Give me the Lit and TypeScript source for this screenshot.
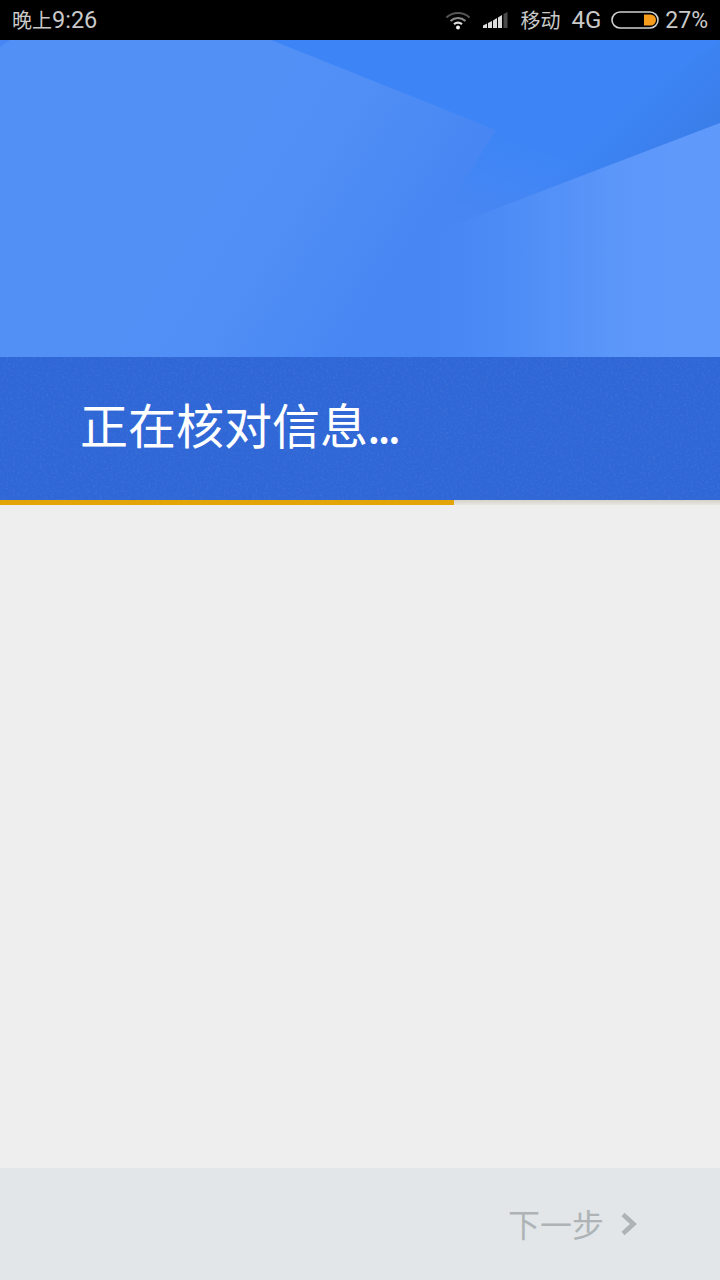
import { LitElement, html, css } from "lit";
import { customElement } from "lit/decorators.js";

@customElement("app-root")
export class AppRoot extends LitElement {
  static styles = css`
    :host {
      display: flex;
      flex-direction: column;
      width: 720px;
      height: 1280px;
      background: #eeeeee;
      font-family: "Roboto", "Noto Sans CJK SC", sans-serif;
      overflow: hidden;
    }
    .status {
      flex: none;
      height: 40px;
      background: #000;
      color: #c9c9c9;
      display: flex;
      align-items: center;
      padding: 0 12px;
      font-size: 23.5px;
      line-height: 40px;
    }
    .time { flex: 1; }
    .cjk { font-family: "Noto Sans CJK SC", sans-serif; font-size: 20px; }
    .right { display: flex; align-items: center; }
    .wifi { display: block; }
    .signal { display: block; margin-left: 12px; }
    .carrier { margin-left: 12px; }
    .net { margin-left: 11px; font-size: 24px; }
    .batt { margin-left: 10px; display: block; }
    .pct { margin-left: 6px; margin-top: 2px; font-size: 23px; }
    .hero { flex: none; display: block; width: 720px; height: 317px; }
    .band {
      flex: none;
      position: relative;
      height: 143px;
      background: #3067d6;
      display: flex;
      align-items: center;
      padding-left: 80px;
      overflow: hidden;
    }
    .noise { position: absolute; inset: 0; width: 100%; height: 100%; }
    .title {
      position: relative;
      color: #fff;
      font-size: 48px;
      line-height: 56px;
      font-weight: 400;
      margin-top: -7px;
      font-family: "Noto Sans CJK SC", sans-serif;
    }
    .dots { font-size: 36px; font-weight: 700; letter-spacing: -1.4px; }
    .track {
      flex: none;
      height: 5px;
      background: linear-gradient(#d6d3ca, #e6e5e1);
    }
    .fill { width: 454px; height: 100%; background: #e3a408; }
    .body { flex: 1; }
    .footer {
      flex: none;
      height: 112px;
      background: #e2e6e9;
      display: flex;
      align-items: center;
      justify-content: flex-end;
      padding-right: 82px;
      gap: 16px;
      color: #aeb3b6;
      font-size: 32px;
      font-family: "Noto Sans CJK SC", sans-serif;
      font-weight: 400;
    }
    .next { margin-top: -3px; }
    .chev { display: block; }
  `;

  render() {
    return html`
      <div class="status">
        <span class="time"><span class="cjk">晚上</span>9:26</span>
        <div class="right">
          <svg class="wifi" width="26" height="20" viewBox="0 0 26 20" fill="none">
            <path d="M1.5 7.5C8 1.5 18 1.5 24.5 7.5" stroke="#555" stroke-width="2.2" />
            <path d="M5.5 11C10 7 16 7 20.5 11" stroke="#8a8a8a" stroke-width="2.2" />
            <path d="M9 14.2C11.4 12.3 14.6 12.3 17 14.2" stroke="#e0e0e0" stroke-width="2.2" />
            <circle cx="13" cy="17.4" r="2" fill="#f0f0f0" />
          </svg>
          <svg class="signal" width="25" height="18" viewBox="0 0 25 18">
            <path d="M0 14.5L4 12.5V17H0Z" fill="#dcdcdc" />
            <path d="M5 12L9 10V17H5Z" fill="#dcdcdc" />
            <path d="M10 9.5L14 7V17H10Z" fill="#dcdcdc" />
            <path d="M15 6.5L19 4V17H15Z" fill="#dcdcdc" />
            <path d="M20.5 3L24.5 1V17H20.5Z" fill="#4a4a4a" />
          </svg>
          <span class="carrier cjk">移动</span>
          <span class="net">4G</span>
          <svg class="batt" width="48" height="18" viewBox="0 0 48 18" fill="none">
            <rect x="1" y="1" width="46" height="16" rx="8" stroke="#d0d0d0" stroke-width="1.6" />
            <path d="M33 3.5H39.5A5.5 5.5 0 0 1 39.5 14.5H33Z" fill="#f79c1d" />
          </svg>
          <span class="pct">27%</span>
        </div>
      </div>
      <svg class="hero" viewBox="0 0 720 317" preserveAspectRatio="none">
        <defs>
          <linearGradient id="base" gradientUnits="userSpaceOnUse" x1="286" y1="30" x2="464" y2="141">
            <stop offset="0" stop-color="#5390f6" />
            <stop offset="0.35" stop-color="#518ef5" />
            <stop offset="1" stop-color="#4786f3" />
          </linearGradient>
          <linearGradient id="dark" gradientUnits="userSpaceOnUse" x1="470" y1="170" x2="494" y2="94">
            <stop offset="0" stop-color="#4786f3" />
            <stop offset="1" stop-color="#3d85f6" />
          </linearGradient>
          <linearGradient id="shade" gradientUnits="userSpaceOnUse" x1="700" y1="90" x2="650" y2="40">
            <stop offset="0" stop-color="#3a7de8" stop-opacity="0.85" />
            <stop offset="1" stop-color="#3a7de8" stop-opacity="0" />
          </linearGradient>
          <linearGradient id="light" gradientUnits="userSpaceOnUse" x1="432" y1="0" x2="670" y2="0">
            <stop offset="0" stop-color="#4786f3" />
            <stop offset="0.3" stop-color="#4d8cf6" />
            <stop offset="0.75" stop-color="#5b96f9" />
            <stop offset="1" stop-color="#5f99fa" />
          </linearGradient>
        </defs>
        <rect width="720" height="317" fill="url(#base)" />
        <polygon points="271,0 720,0 720,83 432,193 496,90" fill="url(#dark)" />
        <polygon points="720,0 720,83 432,193" fill="url(#shade)" />
        <polygon points="720,83 720,317 430,317 432,193" fill="url(#light)" />
        <polygon points="0,0 10,0 0,7" fill="#4685f3" />
      </svg>
      <div class="band">
        <svg class="noise" aria-hidden="true">
          <filter id="grain">
            <feTurbulence type="fractalNoise" baseFrequency="0.45" numOctaves="2" seed="4" />
            <feColorMatrix values="0 0 0 0 1  0 0 0 0 1  0 0 0 0 1  0.9 0 0 0 -0.42" />
          </filter>
          <rect width="100%" height="100%" filter="url(#grain)" opacity="0.16" />
        </svg>
        <span class="title">正在核对信息<span class="dots">...</span></span>
      </div>
      <div class="track"><div class="fill"></div></div>
      <div class="body"></div>
      <div class="footer">
        <span class="next">下一步</span>
        <svg class="chev" width="18" height="24" viewBox="0 0 18 24" fill="none">
          <path d="M3 2.5L13.5 12L3 21.5" stroke="#aeb3b6" stroke-width="4.6" />
        </svg>
      </div>
    `;
  }
}
